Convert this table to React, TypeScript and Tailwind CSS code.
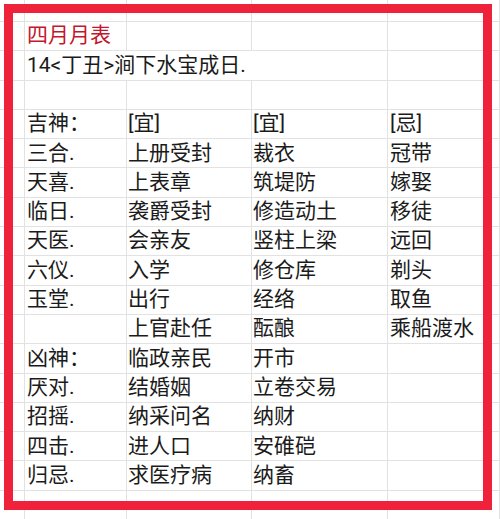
import React from 'react';

const font = { fontFamily: 'Roboto, "Noto Sans CJK SC", sans-serif' };

const rows: [string, string, string, string][] = [
  ['吉神：', '[宜]', '[宜]', '[忌]'],
  ['三合.', '上册受封', '裁衣', '冠带'],
  ['天喜.', '上表章', '筑堤防', '嫁娶'],
  ['临日.', '袭爵受封', '修造动土', '移徒'],
  ['天医.', '会亲友', '竖柱上梁', '远回'],
  ['六仪.', '入学', '修仓库', '剃头'],
  ['玉堂.', '出行', '经络', '取鱼'],
  ['', '上官赴任', '酝酿', '乘船渡水'],
  ['凶神：', '临政亲民', '开市', ''],
  ['厌对.', '结婚姻', '立卷交易', ''],
  ['招摇.', '纳采问名', '纳财', ''],
  ['四击.', '进人口', '安碓硙', ''],
  ['归忌.', '求医疗病', '纳畜', ''],
  ['', '', '', ''],
];

const cell = 'h-[29.3px] border-r border-b border-[#e2e2e2] flex items-center whitespace-nowrap';

export default function App() {
  return (
    <div className="relative w-[500px] h-[519px] overflow-hidden bg-white text-[21px] text-[#1b1b1b]" style={font}>
      <div className="grid grid-cols-[25px_102px_125px_136px_1fr]">
        {/* top partial row */}
        {[0, 1, 2, 3, 4].map((i) => (
          <div key={`t${i}`} className="h-[22px] border-r border-b border-[#e2e2e2]" />
        ))}

        <div className={cell} />
        <div className={`${cell} pl-[2px] text-[#c4162c]`}>四月月表</div>
        <div className={cell} />
        <div className={cell} />
        <div className={cell} />

        <div className={cell} />
        <div className={`${cell} col-span-3 pl-[2px] overflow-visible`}>14&lt;丁丑&gt;涧下水宝成日.</div>
        <div className={cell} />

        {[0, 1, 2, 3, 4].map((i) => (
          <div key={`e${i}`} className={cell} />
        ))}

        {rows.map((r, i) => (
          <React.Fragment key={i}>
            <div className={cell} />
            <div className={`${cell} pl-[2px]`}>{r[0]}</div>
            <div className={`${cell} pl-[1px]`}>{r[1]}</div>
            <div className={`${cell} pl-[1px]`}>{r[2]}</div>
            <div className={`${cell} pl-[2px]`}>{r[3]}</div>
          </React.Fragment>
        ))}
      </div>

      {/* red highlight frame drawn over the sheet */}
      <div className="absolute left-[4px] top-[4px] w-[488px] h-[506px] border-[9px] border-[#f0213b] pointer-events-none" />
    </div>
  );
}
